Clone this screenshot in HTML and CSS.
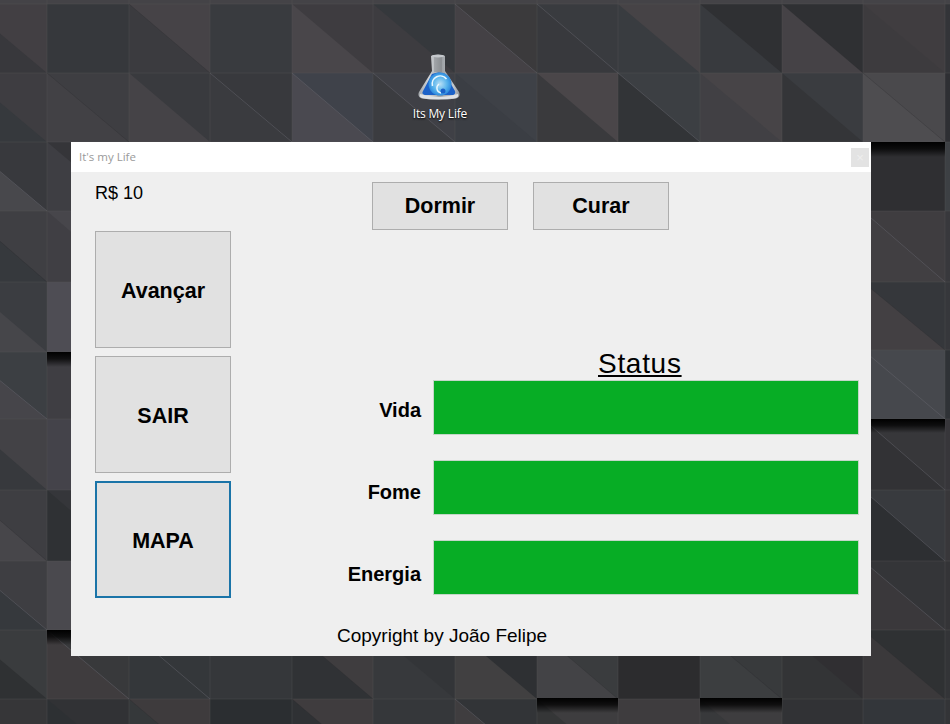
FILE: index.html
```html
<!DOCTYPE html>
<html lang="pt-BR">
<head>
<meta charset="utf-8">
<title>It's my Life</title>
<link rel="stylesheet" href="styles.css">
</head>
<body>
<div class="desktop">
  <svg class="wallpaper" width="950" height="724" viewBox="0 0 950 724" aria-hidden="true">
    <defs>
      <linearGradient id="drop" x1="0" y1="0" x2="0" y2="1">
        <stop offset="0" stop-color="#000"/>
        <stop offset=".45" stop-color="#000" stop-opacity=".75"/>
        <stop offset="1" stop-color="#000" stop-opacity="0"/>
      </linearGradient>
    </defs>
    <rect width="950" height="724" fill="#3a3a3e"/>
    <!-- top strip -->
    <rect width="950" height="4" fill="#444347"/>
    <!-- row 4-73 -->
    <path d="M-35 4h82v69h-82z" fill="#38383c"/><path d="M-35 4h82v69z" fill="#423f43"/>
    <path d="M47 4h82v69h-82z" fill="#36383c"/>
    <path d="M129 4h81v69h-81z" fill="#3b3b3f"/><path d="M129 4h81v69z" fill="#464347"/>
    <path d="M210 4h82v69h-82z" fill="#393b3f"/>
    <path d="M292 4h81v69h-81z" fill="#49464a"/><path d="M292 4h81v69z" fill="#3e3c40"/>
    <path d="M373 4h82v69h-82z" fill="#3d3c40"/><path d="M373 4h82v69z" fill="#35383c"/>
    <path d="M455 4h82v69h-82z" fill="#444145"/><path d="M455 4h82v69z" fill="#3b3a3c"/>
    <path d="M537 4h81v69h-81z" fill="#38393d"/><path d="M537 4h81v69z" fill="#393b3f"/>
    <path d="M618 4h82v69h-82z" fill="#393c40"/><path d="M618 4h82v69z" fill="#464346"/>
    <path d="M700 4h82v69h-82z" fill="#383a3e"/><path d="M700 4h82v69z" fill="#2f3033"/>
    <path d="M782 4h81v69h-81z" fill="#454246"/><path d="M782 4h81v69z" fill="#2f3033"/>
    <path d="M863 4h82v69h-82z" fill="#3d3b3e"/><path d="M863 4h82v69z" fill="#403d40"/>
    <path d="M945 4h82v69h-82z" fill="#333438"/>
    <!-- row 73-142 -->
    <path d="M-35 73h82v69h-82z" fill="#36393d"/><path d="M-35 73h82v69z" fill="#3e3d41"/>
    <path d="M47 73h82v69h-82z" fill="#424145"/><path d="M47 73h82v69z" fill="#3e3e42"/>
    <path d="M129 73h81v69h-81z" fill="#454347"/><path d="M129 73h81v69z" fill="#393a3e"/>
    <path d="M210 73h82v69h-82z" fill="#3a3b3f"/><path d="M210 73h82v69z" fill="#38393d"/>
    <path d="M292 73h81v69h-81z" fill="#4a4950"/><path d="M292 73h81v69z" fill="#3f424a"/>
    <path d="M373 73h82v69h-82z" fill="#3b3c40"/><path d="M373 73h82v69z" fill="#3f4046"/>
    <path d="M455 73h82v69h-82z" fill="#3b3e44"/><path d="M455 73h82v69z" fill="#3e4147"/>
    <path d="M537 73h81v69h-81z" fill="#3a3a3d"/><path d="M537 73h81v69z" fill="#4a4649"/>
    <path d="M618 73h82v69h-82z" fill="#323437"/><path d="M618 73h82v69z" fill="#3c3f43"/>
    <path d="M700 73h82v69h-82z" fill="#414044"/><path d="M700 73h82v69z" fill="#474447"/>
    <path d="M782 73h81v69h-81z" fill="#343538"/><path d="M782 73h81v69z" fill="#3a3c40"/>
    <path d="M863 73h82v69h-82z" fill="#4e4d50"/><path d="M863 73h82v69z" fill="#4a494c"/>
    <path d="M945 73h82v69h-82z" fill="#2e2f33"/>
    <!-- left columns -->
    <path d="M-35 142h82v69h-82z" fill="#48484c"/><path d="M-35 142h82v69z" fill="#38393d"/>
    <path d="M47 142h82v69h-82z" fill="#3e3e43"/><path d="M47 142h82v69z" fill="#353539"/>
    <path d="M-35 211h82v71h-82z" fill="#36393d"/><path d="M-35 211h82v71z" fill="#3f3f43"/>
    <path d="M47 211h82v71h-82z" fill="#403f44"/><path d="M47 211h82v71z" fill="#47464b"/>
    <path d="M-35 282h82v70h-82z" fill="#46464a"/><path d="M-35 282h82v70z" fill="#3b3d41"/>
    <path d="M47 282h82v70h-82z" fill="#4e4d54"/>
    <path d="M-35 352h82v67h-82z" fill="#46454a"/><path d="M-35 352h82v67z" fill="#3c3f43"/>
    <path d="M47 352h82v67h-82z" fill="#3f3e43"/>
    <path d="M-35 419h82v71h-82z" fill="#37393d"/><path d="M-35 419h82v71z" fill="#434246"/>
    <path d="M47 419h82v71h-82z" fill="#44434a"/>
    <path d="M-35 490h82v71h-82z" fill="#47464a"/><path d="M-35 490h82v71z" fill="#3e3e42"/>
    <path d="M47 490h82v71h-82z" fill="#2f3134"/><path d="M47 490h82v71z" fill="#35363a"/>
    <path d="M-35 561h82v69h-82z" fill="#36393d"/><path d="M-35 561h82v69z" fill="#3e3e42"/>
    <path d="M47 561h82v69h-82z" fill="#4a494e"/>
    <!-- right columns -->
    <path d="M863 142h82v69h-82z" fill="#2f2f32"/>
    <path d="M945 142h82v69h-82z" fill="#3d4044"/>
    <path d="M863 211h82v71h-82z" fill="#413f42"/><path d="M863 211h82v71z" fill="#3f3d40"/>
    <path d="M945 211h82v71h-82z" fill="#38383c"/>
    <path d="M863 282h82v68h-82z" fill="#434043"/><path d="M863 282h82v68z" fill="#35373b"/>
    <path d="M945 282h82v68h-82z" fill="#36373b"/>
    <path d="M863 350h82v69h-82z" fill="#46484d"/>
    <path d="M945 350h82v69h-82z" fill="#2f3236"/>
    <path d="M863 419h82v71h-82z" fill="#323235"/><path d="M863 419h82v71z" fill="#37373a"/>
    <path d="M945 419h82v71h-82z" fill="#37363a"/>
    <path d="M863 490h82v71h-82z" fill="#2d2f32"/><path d="M863 490h82v71z" fill="#383a3e"/>
    <path d="M945 490h82v71h-82z" fill="#38373a"/>
    <path d="M863 561h82v69h-82z" fill="#3a383b"/><path d="M863 561h82v69z" fill="#343538"/>
    <path d="M945 561h82v69h-82z" fill="#343437"/>
    <!-- row 630-699 -->
    <path d="M-35 630h82v69h-82z" fill="#2f3133"/><path d="M-35 630h82v69z" fill="#3a3c3e"/>
    <path d="M47 630h82v69h-82z" fill="#3f3c3e"/><path d="M47 630h82v69z" fill="#38393b"/>
    <path d="M129 630h81v69h-81z" fill="#34373a"/>
    <path d="M210 630h82v69h-82z" fill="#35373a"/>
    <path d="M292 630h81v69h-81z" fill="#303235"/><path d="M292 630h81v69z" fill="#3f3d3f"/>
    <path d="M373 630h82v69h-82z" fill="#37393c"/><path d="M373 630h82v69z" fill="#333538"/>
    <path d="M455 630h82v69h-82z" fill="#414041"/><path d="M455 630h82v69z" fill="#2e3033"/>
    <path d="M537 630h81v69h-81z" fill="#434346"/><path d="M537 630h81v69z" fill="#3a3c3e"/>
    <path d="M618 630h82v69h-82z" fill="#2c2c2e"/>
    <path d="M700 630h82v69h-82z" fill="#3c3e40"/><path d="M700 630h82v69z" fill="#383a3c"/>
    <path d="M782 630h81v69h-81z" fill="#333436"/><path d="M782 630h81v69z" fill="#302f32"/>
    <path d="M863 630h82v69h-82z" fill="#3b393b"/><path d="M863 630h82v69z" fill="#2f3133"/>
    <path d="M945 630h82v69h-82z" fill="#333437"/>
    <!-- row 699-768 -->
    <path d="M-35 699h82v69h-82z" fill="#3a3a3c"/><path d="M-35 699h82v69z" fill="#363638"/>
    <path d="M47 699h82v69h-82z" fill="#2d3033"/><path d="M47 699h82v69z" fill="#313235"/>
    <path d="M129 699h81v69h-81z" fill="#35383a"/><path d="M129 699h81v69z" fill="#3e3b3d"/>
    <path d="M210 699h82v69h-82z" fill="#2b2e31"/>
    <path d="M292 699h81v69h-81z" fill="#2f3134"/><path d="M292 699h81v69z" fill="#3f3c3e"/>
    <path d="M373 699h82v69h-82z" fill="#35373a"/>
    <path d="M455 699h82v69h-82z" fill="#3f3d3f"/><path d="M455 699h82v69z" fill="#323437"/>
    <path d="M537 699h81v69h-81z" fill="#353637"/><path d="M537 699h81v69z" fill="#3e3d3f"/>
    <path d="M618 699h82v69h-82z" fill="#3e3c3e"/>
    <path d="M700 699h82v69h-82z" fill="#38393b"/><path d="M700 699h82v69z" fill="#3e3d3f"/>
    <path d="M782 699h81v69h-81z" fill="#313235"/>
    <path d="M863 699h82v69h-82z" fill="#33363a"/>
    <path d="M945 699h82v69h-82z" fill="#333437"/>
    <!-- seams -->
    <path class="seam" d="M47 0V724M129 0V142M129 656V724M210 0V142M210 656V724M292 0V142M292 656V724M373 0V142M373 656V724M455 0V142M455 656V724M537 0V142M537 656V724M618 0V142M618 656V724M700 0V142M700 656V724M782 0V142M782 656V724M863 0V724M945 0V724"/>
    <path class="seam" d="M0 4H950M0 73H950M0 142H950M0 211H71M871 211H950M0 282H71M871 282H950M0 352H71M871 350H950M0 419H71M871 419H950M0 490H71M871 490H950M0 561H71M871 561H950M0 630H71M871 630H950M0 699H950"/>
    <!-- highlighted diagonals -->
    <path class="crease" d="M210 73L292 142M292 73L373 142M373 73L455 142M455 4L537 73M537 4L618 73M618 73L700 142M-35 142L47 211M-35 352L47 419M-35 561L47 630M863 211L945 282M863 350L945 419M863 419L945 490M863 490L945 561M863 561L945 630M47 630L129 699M129 630L210 699M455 699L537 768"/>
    <path class="crease-soft" d="M129 4L210 73M47 73L129 142M782 4L863 73M863 73L945 142M-35 211L47 282M-35 490L47 561M863 282L945 350M292 630L373 699M537 630L618 699M700 630L782 699M863 630L945 699M129 699L210 768M292 699L373 768"/>
    <!-- drop shadows of raised tiles -->
    <rect x="47" y="352" width="82" height="15" fill="url(#drop)"/>
    <rect x="47" y="630" width="82" height="15" fill="url(#drop)"/>
    <rect x="863" y="142" width="82" height="15" fill="url(#drop)"/>
    <rect x="863" y="419" width="82" height="14" fill="url(#drop)"/>
    <rect x="537" y="698" width="81" height="15" fill="url(#drop)"/>
    <rect x="700" y="698" width="82" height="15" fill="url(#drop)"/>
  </svg>

  <div class="shortcut">
    <svg class="shortcut-icon" width="54" height="50" viewBox="0 0 54 50" aria-hidden="true">
      <defs>
        <linearGradient id="glass" x1="0" y1="0" x2="1" y2="0">
          <stop offset="0" stop-color="#a2a6aa"/>
          <stop offset=".25" stop-color="#d2d5d8"/>
          <stop offset=".55" stop-color="#9a9ea2"/>
          <stop offset=".85" stop-color="#c4c8cc"/>
          <stop offset="1" stop-color="#8f9397"/>
        </linearGradient>
        <radialGradient id="orb" cx=".5" cy=".5" r=".52">
          <stop offset="0" stop-color="#b8dff5"/>
          <stop offset=".6" stop-color="#58b4ec"/>
          <stop offset="1" stop-color="#2a86dc"/>
        </radialGradient>
      </defs>
      <path d="M18 6Q25 3.500 32 6L32 21L46 42Q48 47 43 48.500Q26 51 9 48.500Q4 47 6 42L19 21Z" fill="url(#glass)"/>
      <path d="M21 7H29L29 22H21Z" fill="#6c7074" fill-opacity=".3"/>
      <path d="M19 24Q26 21 32 24L42 41Q43 44 40 45H12Q8 44 10 41Z" fill="#1c62c8"/>
      <circle cx="27" cy="34" r="11.500" fill="url(#orb)"/>
      <path d="M19.500 36a8 8 0 0 1 14 -7" fill="none" stroke="#e9f8ff" stroke-width="1.600"/>
      <path d="M26 34a5 5 0 0 0 2 9" fill="none" stroke="#ecf9ff" stroke-width="1.400"/>
      <circle cx="30" cy="41" r="2.500" fill="#1c62c8"/>
      <path d="M7 44Q26 50 45 44Q46 47 43 48Q26 50.500 9 48Q6 47 7 44Z" fill="#dfe2e5"/>
      <ellipse cx="25" cy="6" rx="6.500" ry="1.500" fill="#c4c8cc"/>
    </svg>
    <span class="shortcut-label">Its My Life</span>
  </div>

  <main class="window">
    <header class="titlebar">
      <span class="title">It's my Life</span>
      <span class="close">×</span>
    </header>
    <div class="content">
      <aside class="side">
        <div class="money">R$ 10</div>
        <button class="btn btn-tall">Avançar</button>
        <button class="btn btn-tall">SAIR</button>
        <button class="btn btn-tall btn-focus">MAPA</button>
      </aside>
      <section class="main-col">
        <div class="actions">
          <button class="btn btn-wide">Dormir</button>
          <button class="btn btn-wide">Curar</button>
        </div>
        <h1 class="status-title">Status</h1>
        <div class="meters">
          <span class="label label-vida">Vida</span><div class="bar"></div>
          <span class="label label-fome">Fome</span><div class="bar"></div>
          <span class="label label-energia">Energia</span><div class="bar"></div>
        </div>
      </section>
      <footer class="copyright">Copyright by João Felipe</footer>
    </div>
  </main>
</div>
</body>
</html>
```
FILE: styles.css
```css
* { box-sizing: border-box; }
html, body { margin: 0; padding: 0; }
body { width: 950px; height: 724px; overflow: hidden; font-family: "Liberation Sans", Arial, sans-serif; color: #000; }

.desktop { position: relative; width: 950px; height: 724px; overflow: hidden; background: #3a3a3e; }
.wallpaper { position: absolute; left: 0; top: 0; display: block; }
.seam { fill: none; stroke: #56555a; stroke-opacity: .35; stroke-width: 1; }
.crease { fill: none; stroke: #64646b; stroke-opacity: .5; stroke-width: 1; }
.crease-soft { fill: none; stroke: #2a2a2d; stroke-opacity: .3; stroke-width: 1; }

.shortcut { position: absolute; left: 400px; top: 50px; width: 80px; display: flex; flex-direction: column; align-items: center; }
.shortcut-icon { display: block; }
.shortcut-label { font-family: "Open Sans", "Noto Sans", sans-serif; font-size: 12px; line-height: 16px; margin-top: 6px; color: #fff; letter-spacing: -.2px; text-shadow: 0 1px 2px #000; white-space: nowrap; }

.window { position: absolute; left: 71px; top: 142px; width: 800px; height: 514px; background: #efefef; display: flex; flex-direction: column; }
.titlebar { height: 30px; background: #fff; display: flex; align-items: center; justify-content: space-between; padding: 0 2px 0 8px; }
.title { font-family: "Open Sans", "Noto Sans", sans-serif; font-size: 11.500px; line-height: 14px; margin-top: -1px; color: #9a9a9a; }
.close { width: 18px; height: 19px; margin-top: 1px; background: #e3e3e3; color: #eeeeee; font-size: 13px; line-height: 19px; text-align: center; }

.content { flex: 1; display: grid; grid-template-columns: 136px 1fr; grid-template-rows: auto auto; padding: 0 12px 0 24px; }
.side { display: flex; flex-direction: column; gap: 8px; }
.money { height: 51px; padding-top: 10px; font-size: 18px; line-height: 22px; }

.btn { font-family: "Liberation Sans", Arial, sans-serif; font-weight: 700; font-size: 21.500px; line-height: 22px; color: #000; background: #e1e1e1; border: 1px solid #adadad; padding: 0; margin: 0; display: block; }
.btn-tall { width: 136px; height: 117px; padding-top: 2px; }
.btn-wide { width: 136px; height: 48px; padding-bottom: 1px; }
.btn-focus { border: 2px solid #1a74a8; }

.main-col { display: flex; flex-direction: column; padding-top: 10px; }
.actions { display: flex; gap: 25px; padding-left: 141px; }
.status-title { margin: 119px 0 0; padding-left: 367px; font-size: 28px; letter-spacing: .7px; font-weight: 400; line-height: 30px; height: 31px; text-decoration: underline; }

.meters { display: grid; grid-template-columns: 190px 426px; column-gap: 12px; row-gap: 25px; grid-auto-rows: 55px; align-items: center; }
.label { font-weight: 700; font-size: 20px; line-height: 22px; text-align: right; }
.label-vida { margin-top: 4px; }
.label-fome { margin-top: 8px; }
.label-energia { margin-top: 12px; }
.bar { height: 55px; background: #07ad25; border: 1px solid #c4d6c8; }

.copyright { grid-column: 1 / -1; padding-left: 242px; margin-top: 18px; font-size: 19px; line-height: 22px; }
```
